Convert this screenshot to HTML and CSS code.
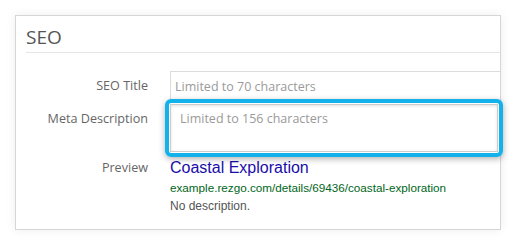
FILE: index.html
```html
<!DOCTYPE html>
<html lang="en">
<head>
  <meta charset="UTF-8" />
  <title>SEO</title>
  <link rel="stylesheet" href="styles.css">
</head>
<body>
  <div class="panel">
    <div class="panel-heading">
      <h3>SEO</h3>
    </div>
    <div class="panel-body">
      <div class="form-row">
        <label for="seo_title">SEO Title</label>
        <input type="text" id="seo_title" placeholder="Limited to 70 characters" />
      </div>
      <div class="form-row">
        <label for="meta_desc">Meta Description</label>
        <div class="highlight">
          <textarea id="meta_desc" placeholder="Limited to 156 characters"></textarea>
        </div>
      </div>
      <div class="form-row">
        <label class="preview-label">Preview</label>
        <div class="preview">
          <div class="preview-title">Coastal Exploration</div>
          <div class="preview-url">example.rezgo.com/details/69436/coastal-exploration</div>
          <div class="preview-desc">No description.</div>
        </div>
      </div>
    </div>
  </div>
</body>
</html>
```

FILE: styles.css
```css
* {
  box-sizing: border-box;
}

body {
  margin: 0;
  padding: 15px;
  background: white;
  font-family: 'Open Sans', sans-serif;
}

.panel {
  width: 486px;
  background: white;
  border: 1px solid #d6d6d6;
  box-shadow: 0 0 10px rgba(0, 0, 0, 0.07);
  padding: 0 0 10px 10px;
}

.panel-heading {
  padding-top: 8px;
  border-bottom: 1px solid #e6e6e6;
}

.panel-heading h3 {
  margin: 0;
  font-size: 19px;
  font-weight: 400;
  line-height: 26px;
  padding-bottom: 2px;
  color: #555;
}

.panel-body {
  padding-top: 18px;
}

.form-row {
  display: grid;
  grid-template-columns: 122px 1fr;
  column-gap: 22px;
  margin-bottom: 3px;
}

.form-row label {
  text-align: right;
  font-size: 12.6px;
  line-height: 30px;
  color: #666;
}

input[type="text"] {
  height: 30px;
  width: 100%;
  border: 1px solid #dcdcdc;
  border-right: none;
  padding: 0 4px;
  font-family: 'Open Sans', sans-serif;
  font-size: 12.5px;
  color: #555;
  outline: none;
}

textarea {
  display: block;
  width: 328px;
  height: 48px;
  border: 1px solid #ccc;
  box-shadow: inset 0 1px 3px rgba(0, 0, 0, 0.12);
  padding: 5px 9px;
  font-family: 'Open Sans', sans-serif;
  font-size: 12.5px;
  line-height: 18px;
  resize: none;
  outline: none;
}

::placeholder {
  color: #9a9a9a;
}

.highlight {
  position: relative;
  width: 328px;
}

.highlight::after {
  content: "";
  position: absolute;
  top: -5px;
  left: -5px;
  right: -5px;
  bottom: -5px;
  border: 4px solid #13b2ea;
  border-radius: 6px;
  box-shadow: 0 2px 6px rgba(0, 0, 0, 0.3);
  pointer-events: none;
}

.form-row .preview-label {
  line-height: 26px;
}

.preview {
  padding-top: 3px;
  font-family: 'Liberation Sans', Arial, sans-serif;
}

.preview-title {
  font-size: 16px;
  line-height: 20px;
  color: #1a0dab;
}

.preview-url {
  font-size: 11.7px;
  line-height: 19px;
  color: #006621;
}

.preview-desc {
  font-size: 12px;
  line-height: 19px;
  color: #545454;
}
```
